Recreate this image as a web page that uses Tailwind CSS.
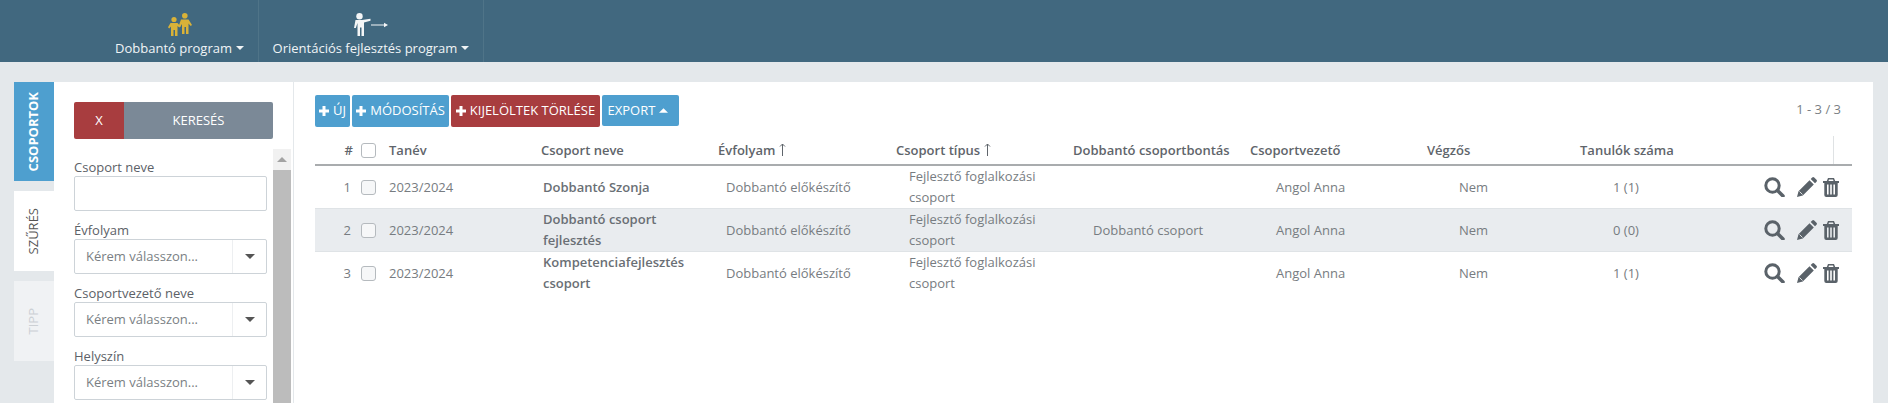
<!DOCTYPE html>
<html lang="hu">
<head>
    <meta charset="UTF-8">
    <title>Csoportok</title>
    <script src="https://cdn.jsdelivr.net/npm/@tailwindcss/browser@4"></script>
</head>
<body class="bg-[#e4e8eb] font-['Open_Sans',sans-serif] text-[13px] text-[#777c81] h-[403px] overflow-hidden">
    <!-- Header -->
    <header class="bg-[#41687f] h-[62px] flex pl-[101px] text-[13px] text-[#f0f4f6]">
        <a class="w-[158px] border-r border-[#4f7488] flex flex-col items-center pt-[13px]">
            <svg class="w-[24px] h-[23px] ml-[1px]" viewBox="0 0 24 23" fill="#d9b238">
                <circle cx="6" cy="6.5" r="2.6"/>
                <path d="M2.500 10h7l3 3.500-1.200 1-1.800-1.600V23H7v-6H5.500v6H3v-9.500L1.200 15.500 0 14.200z"/>
                <circle cx="16.800" cy="2.800" r="2.800"/>
                <path d="M13 6.500h7.500l3.500 5.500-1.300 1-2.200-2.500V21h-2.500v-7h-1.500v7h-2.500v-10l-1.800 3-1.500-1z"/>
            </svg>
            <span class="mt-[2px] leading-[20px] flex items-center">Dobbantó program
                <svg class="w-[8px] h-[4px] ml-[4px]" viewBox="0 0 8 4" fill="#f0f4f6"><path d="M0 0h8L4 4z"/></svg>
            </span>
        </a>
        <a class="w-[225px] border-r border-[#4f7488] flex flex-col items-center pt-[13px]">
            <svg class="w-[34px] h-[23px]" viewBox="0 0 34 23" fill="#f4f6f7">
                <circle cx="5.500" cy="3.200" r="3.200"/>
                <path d="M1.500 7h6.500l8.500-1.200v2l-6.500 1.700V23H7.500v-8.500H6V23H3.500v-13L1.800 15H0z"/>
                <path d="M17 11.600h13V9.800l4 2.200-4 2.200v-1.800H17z"/>
            </svg>
            <span class="mt-[2px] leading-[20px] flex items-center">Orientációs fejlesztés program
                <svg class="w-[8px] h-[4px] ml-[4px]" viewBox="0 0 8 4" fill="#f0f4f6"><path d="M0 0h8L4 4z"/></svg>
            </span>
        </a>
    </header>

    <main class="flex pt-[20px] pl-[14px] pr-[15px] h-[341px]">
        <!-- Tabs -->
        <div class="w-[40px] flex flex-col gap-[10px]">
            <div class="h-[99px] bg-[#4e9fcf] text-white font-bold flex items-center justify-center"><span class="[writing-mode:vertical-rl] rotate-180">CSOPORTOK</span></div>
            <div class="h-[80px] bg-white text-[#555] flex items-center justify-center"><span class="[writing-mode:vertical-rl] rotate-180">SZŰRÉS</span></div>
            <div class="h-[80px] bg-[#f0f2f4] text-[#ccd0d4] flex items-center justify-center"><span class="[writing-mode:vertical-rl] rotate-180">TIPP</span></div>
        </div>

        <!-- Filter panel -->
        <aside class="w-[240px] shrink-0 bg-white border-r border-[#e4e8eb] pt-[20px] pl-[20px] flex flex-col">
            <div class="w-[199px] h-[37px] flex text-white rounded-[2px] overflow-hidden">
                <button class="w-[50px] bg-[#a83d3f]">X</button>
                <button class="flex-1 bg-[#7b8997]">KERESÉS</button>
            </div>
            <div class="flex gap-[6px] mt-[10px] flex-1 overflow-hidden">
                <div class="w-[193px] pt-[9px] flex flex-col gap-[10px] text-[#5c6167]">
                    <div>
                        <label class="block h-[18px] leading-[18px]">Csoport neve</label>
                        <input type="text" class="block w-full h-[35px] border border-[#cdd3d8] rounded-[2px]">
                    </div>
                    <div>
                        <label class="block h-[18px] leading-[18px]">Évfolyam</label>
                        <div class="h-[35px] border border-[#cdd3d8] rounded-[2px] flex items-center text-[#7a7f84]">
                            <span class="flex-1 pl-[11px]">Kérem válasszon...</span>
                            <span class="w-[34px] h-full border-l border-[#edeff1] flex items-center justify-center"><svg class="w-[10px] h-[5px]" viewBox="0 0 10 5" fill="#555"><path d="M0 0h10L5 5z"/></svg></span>
                        </div>
                    </div>
                    <div>
                        <label class="block h-[18px] leading-[18px]">Csoportvezető neve</label>
                        <div class="h-[35px] border border-[#cdd3d8] rounded-[2px] flex items-center text-[#7a7f84]">
                            <span class="flex-1 pl-[11px]">Kérem válasszon...</span>
                            <span class="w-[34px] h-full border-l border-[#edeff1] flex items-center justify-center"><svg class="w-[10px] h-[5px]" viewBox="0 0 10 5" fill="#555"><path d="M0 0h10L5 5z"/></svg></span>
                        </div>
                    </div>
                    <div>
                        <label class="block h-[18px] leading-[18px]">Helyszín</label>
                        <div class="h-[35px] border border-[#cdd3d8] rounded-[2px] flex items-center text-[#7a7f84]">
                            <span class="flex-1 pl-[11px]">Kérem válasszon...</span>
                            <span class="w-[34px] h-full border-l border-[#edeff1] flex items-center justify-center"><svg class="w-[10px] h-[5px]" viewBox="0 0 10 5" fill="#555"><path d="M0 0h10L5 5z"/></svg></span>
                        </div>
                    </div>
                </div>
                <!-- Scrollbar -->
                <div class="w-[18px] bg-[#f1f1f1] flex flex-col">
                    <div class="h-[21px] flex items-center justify-center"><svg class="w-[10px] h-[5px]" viewBox="0 0 10 5" fill="#a3a3a3"><path d="M0 5h10L5 0z"/></svg></div>
                    <div class="flex-1 bg-[#bcbcbc]"></div>
                </div>
            </div>
        </aside>

        <!-- Content -->
        <section class="flex-1 bg-white pt-[13px] pl-[21px] pr-[21px]">
            <div class="flex justify-between items-start h-[32px]">
                <div class="flex gap-[2px] text-white">
                    <button class="w-[35px] h-[32px] bg-[#4e9fcf] rounded-[2px] flex items-center justify-center gap-[4px]">
                        <svg class="w-[10px] h-[10px]" viewBox="0 0 10 10" fill="#fff"><path d="M3.500 0h3v3.500H10v3H6.500V10h-3V6.500H0v-3h3.500z"/></svg>ÚJ
                    </button>
                    <button class="w-[97px] h-[32px] bg-[#4e9fcf] rounded-[2px] flex items-center justify-center gap-[4px]">
                        <svg class="w-[10px] h-[10px]" viewBox="0 0 10 10" fill="#fff"><path d="M3.500 0h3v3.500H10v3H6.500V10h-3V6.500H0v-3h3.500z"/></svg>MÓDOSÍTÁS
                    </button>
                    <button class="w-[149px] h-[32px] bg-[#a83d3f] rounded-[2px] flex items-center justify-center gap-[4px] whitespace-nowrap">
                        <svg class="w-[10px] h-[10px]" viewBox="0 0 10 10" fill="#fff"><path d="M3.500 0h3v3.500H10v3H6.500V10h-3V6.500H0v-3h3.500z"/></svg>KIJELÖLTEK TÖRLÉSE
                    </button>
                    <button class="w-[77px] h-[31px] bg-[#4e9fcf] rounded-[2px] flex items-center justify-center gap-[4px] pr-[5px]">EXPORT
                        <svg class="w-[9px] h-[5px]" viewBox="0 0 10 5" fill="#fff"><path d="M0 5h10L5 0z"/></svg>
                    </button>
                </div>
                <span class="pr-[11px] pt-[5px] text-[#7a7f84]">1 - 3 / 3</span>
            </div>

            <table class="mt-[9px] w-[1537px] table-fixed">
                <colgroup>
                    <col class="w-[42px]"><col class="w-[32px]"><col class="w-[152px]"><col class="w-[177px]"><col class="w-[178px]"><col class="w-[177px]"><col class="w-[177px]"><col class="w-[177px]"><col class="w-[153px]"><col class="w-[172px]"><col>
                </colgroup>
                <thead class="text-[#5f656b] font-semibold">
                    <tr class="h-[29px] border-b-2 border-[#a9acae] text-left">
                        <th class="font-semibold text-right pr-[4px] pt-[1px]">#</th>
                        <th class="pl-[4px] pt-[1px]"><input type="checkbox" class="block appearance-none w-[15px] h-[15px] border border-[#b5babe] rounded-[3px]"></th>
                        <th class="font-semibold pt-[1px]">Tanév</th>
                        <th class="font-semibold pt-[1px]">Csoport neve</th>
                        <th class="font-semibold pt-[1px]"><span class="flex items-center gap-[4px]">Évfolyam<svg class="w-[7px] h-[13px] mb-[3px]" viewBox="0 0 7 13" fill="none" stroke="#5f656b"><path d="M3.500 13V1M1 3.500 3.500 1 6 3.500"/></svg></span></th>
                        <th class="font-semibold pt-[1px]"><span class="flex items-center gap-[4px]">Csoport típus<svg class="w-[7px] h-[13px] mb-[3px]" viewBox="0 0 7 13" fill="none" stroke="#5f656b"><path d="M3.500 13V1M1 3.500 3.500 1 6 3.500"/></svg></span></th>
                        <th class="font-semibold pt-[1px]">Dobbantó csoportbontás</th>
                        <th class="font-semibold pt-[1px]">Csoportvezető</th>
                        <th class="font-semibold pt-[1px]">Végzős</th>
                        <th class="font-semibold pt-[1px]">Tanulók száma</th>
                        <th class="relative"><span class="absolute left-[81px] top-0 bottom-0 w-px bg-[#dfe2e4]"></span></th>
                    </tr>
                </thead>
                <tbody class="leading-[21px]">
                    <tr class="h-[42px] border-b border-[#dfe3e6]">
                        <td class="text-right pr-[6px]">1</td>
                        <td class="pl-[4px]"><input type="checkbox" class="block appearance-none w-[15px] h-[15px] border border-[#b5babe] bg-[#f6f7f8] rounded-[3px]"></td>
                        <td>2023/2024</td>
                        <td class="pl-[2px] pr-[30px] font-semibold text-[#6a6f75]">Dobbantó Szonja</td>
                        <td class="pl-[8px]">Dobbantó előkészítő</td>
                        <td class="pl-[13px] pr-[30px]">Fejlesztő foglalkozási csoport</td>
                        <td class="pl-[20px]"></td>
                        <td class="pl-[26px]">Angol Anna</td>
                        <td class="pl-[32px]">Nem</td>
                        <td class="pl-[33px]">1 (1)</td>
                        <td>
                            <div class="flex items-center justify-end pr-[13px] text-[#5a6269]">
                                <svg class="w-[21px] h-[20px]" viewBox="0 0 21 20" fill="none" stroke="currentColor"><circle cx="8.500" cy="8.500" r="6.700" stroke-width="3"/><path d="M13.500 13.500 19 19" stroke-width="3.500" stroke-linecap="round"/></svg>
                                <svg class="w-[20px] h-[20px] ml-[12px]" viewBox="0 0 20 20" fill="currentColor"><path d="M0 20l1.500-5.800L12.500 3.200l4.300 4.300L5.800 18.500zM13.700 2l1.500-1.500a1.500 1.500 0 0 1 2 0l2.300 2.300a1.500 1.500 0 0 1 0 2L18 6.300z"/><path d="M2.500 14.500 5.500 17.500" stroke="#fff" stroke-width="0.8"/></svg>
                                <svg class="w-[16px] h-[19px] ml-[6px]" viewBox="0 0 16 19" fill="currentColor"><path fill-rule="evenodd" d="M5 0h6l1.200 3H16v2h-1.300v12a2 2 0 0 1-2 2H3.300a2 2 0 0 1-2-2V5H0V3h3.800zM6 1.500 5.500 3h5L10 1.500zM4 6.500V16.500h1.600V6.500zM7.200 6.500V16.500h1.600V6.500zM10.400 6.500V16.500H12V6.500z"/></svg>
                            </div>
                        </td>
                    </tr>
                    <tr class="h-[42px] bg-[#e9ecef] border-b border-[#dfe3e6]">
                        <td class="text-right pr-[6px]">2</td>
                        <td class="pl-[4px]"><input type="checkbox" class="block appearance-none w-[15px] h-[15px] border border-[#b5babe] bg-[#f6f7f8] rounded-[3px]"></td>
                        <td>2023/2024</td>
                        <td class="pl-[2px] pr-[30px] font-semibold text-[#6a6f75]">Dobbantó csoport fejlesztés</td>
                        <td class="pl-[8px]">Dobbantó előkészítő</td>
                        <td class="pl-[13px] pr-[30px]">Fejlesztő foglalkozási csoport</td>
                        <td class="pl-[20px]">Dobbantó csoport</td>
                        <td class="pl-[26px]">Angol Anna</td>
                        <td class="pl-[32px]">Nem</td>
                        <td class="pl-[33px]">0 (0)</td>
                        <td>
                            <div class="flex items-center justify-end pr-[13px] text-[#5a6269]">
                                <svg class="w-[21px] h-[20px]" viewBox="0 0 21 20" fill="none" stroke="currentColor"><circle cx="8.500" cy="8.500" r="6.700" stroke-width="3"/><path d="M13.500 13.500 19 19" stroke-width="3.500" stroke-linecap="round"/></svg>
                                <svg class="w-[20px] h-[20px] ml-[12px]" viewBox="0 0 20 20" fill="currentColor"><path d="M0 20l1.500-5.800L12.500 3.200l4.300 4.300L5.800 18.500zM13.700 2l1.500-1.500a1.500 1.500 0 0 1 2 0l2.300 2.300a1.500 1.500 0 0 1 0 2L18 6.300z"/><path d="M2.500 14.500 5.500 17.500" stroke="#fff" stroke-width="0.8"/></svg>
                                <svg class="w-[16px] h-[19px] ml-[6px]" viewBox="0 0 16 19" fill="currentColor"><path fill-rule="evenodd" d="M5 0h6l1.200 3H16v2h-1.300v12a2 2 0 0 1-2 2H3.300a2 2 0 0 1-2-2V5H0V3h3.800zM6 1.500 5.500 3h5L10 1.500zM4 6.500V16.500h1.600V6.500zM7.200 6.500V16.500h1.600V6.500zM10.400 6.500V16.500H12V6.500z"/></svg>
                            </div>
                        </td>
                    </tr>
                    <tr class="h-[42px]">
                        <td class="text-right pr-[6px]">3</td>
                        <td class="pl-[4px]"><input type="checkbox" class="block appearance-none w-[15px] h-[15px] border border-[#b5babe] bg-[#f6f7f8] rounded-[3px]"></td>
                        <td>2023/2024</td>
                        <td class="pl-[2px] pr-[30px] font-semibold text-[#6a6f75]">Kompetenciafejlesztés csoport</td>
                        <td class="pl-[8px]">Dobbantó előkészítő</td>
                        <td class="pl-[13px] pr-[30px]">Fejlesztő foglalkozási csoport</td>
                        <td class="pl-[20px]"></td>
                        <td class="pl-[26px]">Angol Anna</td>
                        <td class="pl-[32px]">Nem</td>
                        <td class="pl-[33px]">1 (1)</td>
                        <td>
                            <div class="flex items-center justify-end pr-[13px] text-[#5a6269]">
                                <svg class="w-[21px] h-[20px]" viewBox="0 0 21 20" fill="none" stroke="currentColor"><circle cx="8.500" cy="8.500" r="6.700" stroke-width="3"/><path d="M13.500 13.500 19 19" stroke-width="3.500" stroke-linecap="round"/></svg>
                                <svg class="w-[20px] h-[20px] ml-[12px]" viewBox="0 0 20 20" fill="currentColor"><path d="M0 20l1.500-5.800L12.500 3.200l4.300 4.300L5.800 18.500zM13.700 2l1.500-1.500a1.500 1.500 0 0 1 2 0l2.300 2.300a1.500 1.500 0 0 1 0 2L18 6.300z"/><path d="M2.500 14.500 5.500 17.500" stroke="#fff" stroke-width="0.8"/></svg>
                                <svg class="w-[16px] h-[19px] ml-[6px]" viewBox="0 0 16 19" fill="currentColor"><path fill-rule="evenodd" d="M5 0h6l1.200 3H16v2h-1.300v12a2 2 0 0 1-2 2H3.300a2 2 0 0 1-2-2V5H0V3h3.800zM6 1.500 5.500 3h5L10 1.500zM4 6.500V16.500h1.600V6.500zM7.200 6.500V16.500h1.600V6.500zM10.400 6.500V16.500H12V6.500z"/></svg>
                            </div>
                        </td>
                    </tr>
                </tbody>
            </table>
        </section>
    </main>
</body>
</html>
